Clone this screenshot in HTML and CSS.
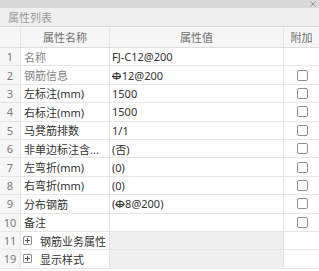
FILE: index.html
```html
<!DOCTYPE html>
<html lang="zh-CN">
<head>
<meta charset="utf-8">
<title>属性列表</title>
<link rel="stylesheet" href="styles.css">
</head>
<body>
<div class="panel">
  <div class="topbar">
    <svg class="close" width="6" height="6" viewBox="0 0 6 6"><path d="M0.5 0.5L5.5 5.5M5.5 0.5L0.5 5.5" stroke="#9a9a9a" stroke-width="1"/></svg>
  </div>
  <div class="title">属性列表</div>
  <div class="grid">
    <div class="row head">
      <div class="c num"></div>
      <div class="c name">属性名称</div>
      <div class="c val">属性值</div>
      <div class="c add">附加</div>
    </div>
    <div class="row">
      <div class="c num">1</div>
      <div class="c name dim">名称</div>
      <div class="c val">FJ-C12@200</div>
      <div class="c add"></div>
    </div>
    <div class="row">
      <div class="c num">2</div>
      <div class="c name dim">钢筋信息</div>
      <div class="c val"><span class="rebar">Φ</span>12@200</div>
      <div class="c add"><span class="chk"></span></div>
    </div>
    <div class="row">
      <div class="c num">3</div>
      <div class="c name">左标注(mm)</div>
      <div class="c val">1500</div>
      <div class="c add"><span class="chk"></span></div>
    </div>
    <div class="row">
      <div class="c num">4</div>
      <div class="c name">右标注(mm)</div>
      <div class="c val">1500</div>
      <div class="c add"><span class="chk"></span></div>
    </div>
    <div class="row">
      <div class="c num">5</div>
      <div class="c name">马凳筋排数</div>
      <div class="c val">1/1</div>
      <div class="c add"><span class="chk"></span></div>
    </div>
    <div class="row">
      <div class="c num">6</div>
      <div class="c name">非单边标注含...</div>
      <div class="c val">(否)</div>
      <div class="c add"><span class="chk"></span></div>
    </div>
    <div class="row">
      <div class="c num">7</div>
      <div class="c name">左弯折(mm)</div>
      <div class="c val">(0)</div>
      <div class="c add"><span class="chk"></span></div>
    </div>
    <div class="row">
      <div class="c num">8</div>
      <div class="c name">右弯折(mm)</div>
      <div class="c val">(0)</div>
      <div class="c add"><span class="chk"></span></div>
    </div>
    <div class="row">
      <div class="c num">9</div>
      <div class="c name">分布钢筋</div>
      <div class="c val">(<span class="rebar">Φ</span>8@200)</div>
      <div class="c add"><span class="chk"></span></div>
    </div>
    <div class="row">
      <div class="c num">10</div>
      <div class="c name">备注</div>
      <div class="c val"></div>
      <div class="c add"><span class="chk"></span></div>
    </div>
    <div class="row group">
      <div class="c num">11</div>
      <div class="c name"><span class="plus"></span>钢筋业务属性</div>
      <div class="c val"></div>
      <div class="c add"></div>
    </div>
    <div class="row group">
      <div class="c num">19</div>
      <div class="c name"><span class="plus"></span>显示样式</div>
      <div class="c val"></div>
      <div class="c add"></div>
    </div>
  </div>
</div>
</body>
</html>
```

FILE: styles.css
```css
html, body {
  margin: 0;
  padding: 0;
  background: #ffffff;
}

.panel {
  width: 319px;
  font-family: "Noto Sans", "Noto Sans CJK SC", sans-serif;
  font-size: 11px;
  color: #333333;
}

.topbar {
  height: 8px;
  background: #dadada;
  display: flex;
  justify-content: flex-end;
  align-items: center;
  padding-right: 3px;
}

.close {
  display: block;
}

.title {
  height: 19px;
  box-sizing: border-box;
  background: #efefef;
  color: #9a9a9a;
  padding-left: 8px;
  display: flex;
  align-items: center;
  border-bottom: 1px solid #dcdcdc;
}

.row {
  display: grid;
  grid-template-columns: 21px 89px 174px 35px;
  height: 18.4px;
  box-sizing: border-box;
  border-bottom: 1px solid #e6e6e6;
}

.row.head {
  height: 21px;
  background: #f6f6f6;
  color: #6e6e6e;
  border-bottom: 1px solid #dedede;
}

.c {
  box-sizing: border-box;
  border-right: 1px solid #e4e4e4;
  display: flex;
  align-items: center;
  white-space: nowrap;
  overflow: hidden;
  min-width: 0;
}

.c.add {
  border-right: none;
  justify-content: center;
}

.head .c {
  justify-content: center;
}

.c.num {
  justify-content: center;
  background: #f6f6f6;
  color: #7a7a7a;
}

.c.name {
  padding-left: 3px;
}

.c.name.dim {
  color: #858585;
}

.group .c.name {
  padding-left: 2px;
}

.c.val {
  padding-left: 2px;
}

.head .c.val,
.head .c.name {
  padding-left: 0;
}

.group .c.val {
  background: #efefef;
}

.rebar {
  text-decoration: line-through;
  text-decoration-thickness: 1px;
  margin-right: 0.5px;
}

.chk {
  width: 11px;
  height: 11px;
  box-sizing: border-box;
  border: 1px solid #8f8f8f;
  border-radius: 2px;
  background: #ffffff;
  margin-left: 1px;
}

.plus {
  flex: none;
  width: 9px;
  height: 9px;
  box-sizing: border-box;
  border: 1px solid #8f8f8f;
  border-radius: 1px;
  margin-right: 8px;
  background:
    linear-gradient(#555, #555) center / 5px 1px no-repeat,
    linear-gradient(#555, #555) center / 1px 5px no-repeat;
}
```
